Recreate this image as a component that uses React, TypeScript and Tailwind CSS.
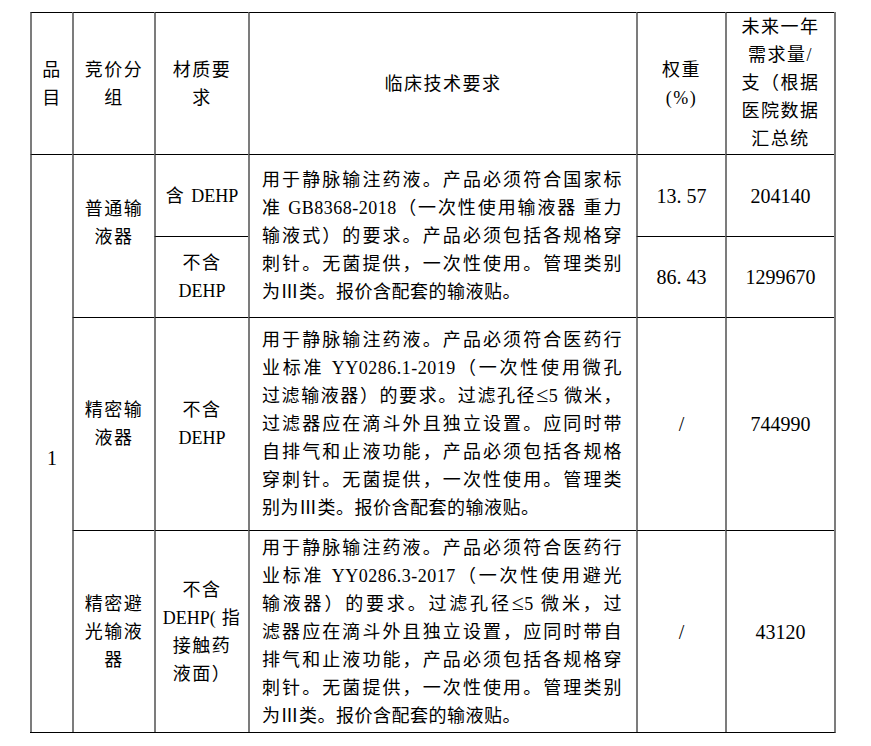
const V = "border-l-2 border-l-[#7c7c7c]";
const H = "border-t border-t-black";
const NUM = "text-[20px] tracking-normal";

function Cell({
  className = "",
  children,
}: {
  className?: string;
  children?: React.ReactNode;
}) {
  return (
    <div
      className={`flex flex-col items-center justify-center text-center ${className}`}
    >
      {children}
    </div>
  );
}

// the ≤ sign is drawn a bit larger, like the document's ⩽
function Line({ text }: { text: string }) {
  const parts = text.split("≤");
  return (
    <>
      {parts.map((p, i) => (
        <span key={i}>
          {i > 0 && <span className="text-[22px] leading-none">≤</span>}
          {p}
        </span>
      ))}
    </>
  );
}

function Para({ lines }: { lines: string[] }) {
  return (
    <div className="w-[360px] tracking-[0.5px]">
      {lines.map((l, i) => (
        <div
          key={i}
          className={
            i < lines.length - 1
              ? "h-[28px] whitespace-nowrap text-justify [text-align-last:justify]"
              : "h-[28px] whitespace-nowrap text-left"
          }
        >
          <Line text={l} />
        </div>
      ))}
    </div>
  );
}

const row1 = [
  "用于静脉输注药液。产品必须符合国家标",
  "准 GB8368-2018（一次性使用输液器 重力",
  "输液式）的要求。产品必须包括各规格穿",
  "刺针。无菌提供，一次性使用。管理类别",
  "为Ⅲ类。报价含配套的输液贴。",
];

const row2 = [
  "用于静脉输注药液。产品必须符合医药行",
  "业标准 YY0286.1-2019（一次性使用微孔",
  "过滤输液器）的要求。过滤孔径≤5 微米，",
  "过滤器应在滴斗外且独立设置。应同时带",
  "自排气和止液功能，产品必须包括各规格",
  "穿刺针。无菌提供，一次性使用。管理类",
  "别为Ⅲ类。报价含配套的输液贴。",
];

const row3 = [
  "用于静脉输注药液。产品必须符合医药行",
  "业标准 YY0286.3-2017（一次性使用避光",
  "输液器）的要求。过滤孔径≤5 微米，过",
  "滤器应在滴斗外且独立设置，应同时带自",
  "排气和止液功能，产品必须包括各规格穿",
  "刺针。无菌提供，一次性使用。管理类别",
  "为Ⅲ类。报价含配套的输液贴。",
];

export default function App() {
  return (
    <div className="min-h-[746px] bg-white pl-[30px] pt-[12px] text-black [font-family:'Liberation_Serif','Noto_Sans_CJK_SC',serif]">
      <div className="grid w-[806px] grid-cols-[42px_82px_94px_388px_89px_109px] grid-rows-[142px_82px_81px_213px_202px] border-r-2 border-b border-r-[#7c7c7c] border-b-black text-[18px] leading-[28px] tracking-[1.5px]">
        {/* header */}
        <Cell className={`${V} ${H}`}>
          <span>品</span>
          <span>目</span>
        </Cell>
        <Cell className={`${V} ${H}`}>
          <span>竞价分</span>
          <span>组</span>
        </Cell>
        <Cell className={`${V} ${H}`}>
          <span>材质要</span>
          <span>求</span>
        </Cell>
        <Cell className={`${V} ${H}`}>
          <span>临床技术要求</span>
        </Cell>
        <Cell className={`${V} ${H}`}>
          <span>权重</span>
          <span>(%)</span>
        </Cell>
        <Cell className={`${V} ${H} justify-start overflow-hidden`}>
          <span>未来一年</span>
          <span>需求量/</span>
          <span>支（根据</span>
          <span>医院数据</span>
          <span>汇总统</span>
        </Cell>

        {/* 品目 1 */}
        <Cell className={`${V} ${H} row-span-4 pt-[28px]`}>
          <span className={NUM}>1</span>
        </Cell>

        {/* 普通输液器 */}
        <Cell className={`${V} ${H} row-span-2 pb-[26px]`}>
          <span>普通输</span>
          <span>液器</span>
        </Cell>
        <Cell className={`${V} ${H}`}>
          <span>
            含 <span className="tracking-normal">DEHP</span>
          </span>
        </Cell>
        <div className={`${V} ${H} row-span-2 flex items-center pl-[12px]`}>
          <Para lines={row1} />
        </div>
        <Cell className={`${V} ${H}`}>
          <span className={NUM}>13. 57</span>
        </Cell>
        <Cell className={`${V} ${H}`}>
          <span className={NUM}>204140</span>
        </Cell>
        <Cell className={`${V} ${H}`}>
          <span>不含</span>
          <span className="tracking-normal">DEHP</span>
        </Cell>
        <Cell className={`${V} ${H}`}>
          <span className={NUM}>86. 43</span>
        </Cell>
        <Cell className={`${V} ${H}`}>
          <span className={NUM}>1299670</span>
        </Cell>

        {/* 精密输液器 */}
        <Cell className={`${V} ${H}`}>
          <span>精密输</span>
          <span>液器</span>
        </Cell>
        <Cell className={`${V} ${H}`}>
          <span>不含</span>
          <span className="tracking-normal">DEHP</span>
        </Cell>
        <div className={`${V} ${H} flex items-center pl-[12px]`}>
          <Para lines={row2} />
        </div>
        <Cell className={`${V} ${H}`}>
          <span className={NUM}>/</span>
        </Cell>
        <Cell className={`${V} ${H}`}>
          <span className={NUM}>744990</span>
        </Cell>

        {/* 精密避光输液器 */}
        <Cell className={`${V} ${H}`}>
          <span>精密避</span>
          <span>光输液</span>
          <span>器</span>
        </Cell>
        <Cell className={`${V} ${H}`}>
          <span>不含</span>
          <span>
            <span className="tracking-normal">DEHP(</span> 指
          </span>
          <span>接触药</span>
          <span>液面）</span>
        </Cell>
        <div className={`${V} ${H} flex items-center pl-[12px]`}>
          <Para lines={row3} />
        </div>
        <Cell className={`${V} ${H}`}>
          <span className={NUM}>/</span>
        </Cell>
        <Cell className={`${V} ${H}`}>
          <span className={NUM}>43120</span>
        </Cell>
      </div>
    </div>
  );
}
